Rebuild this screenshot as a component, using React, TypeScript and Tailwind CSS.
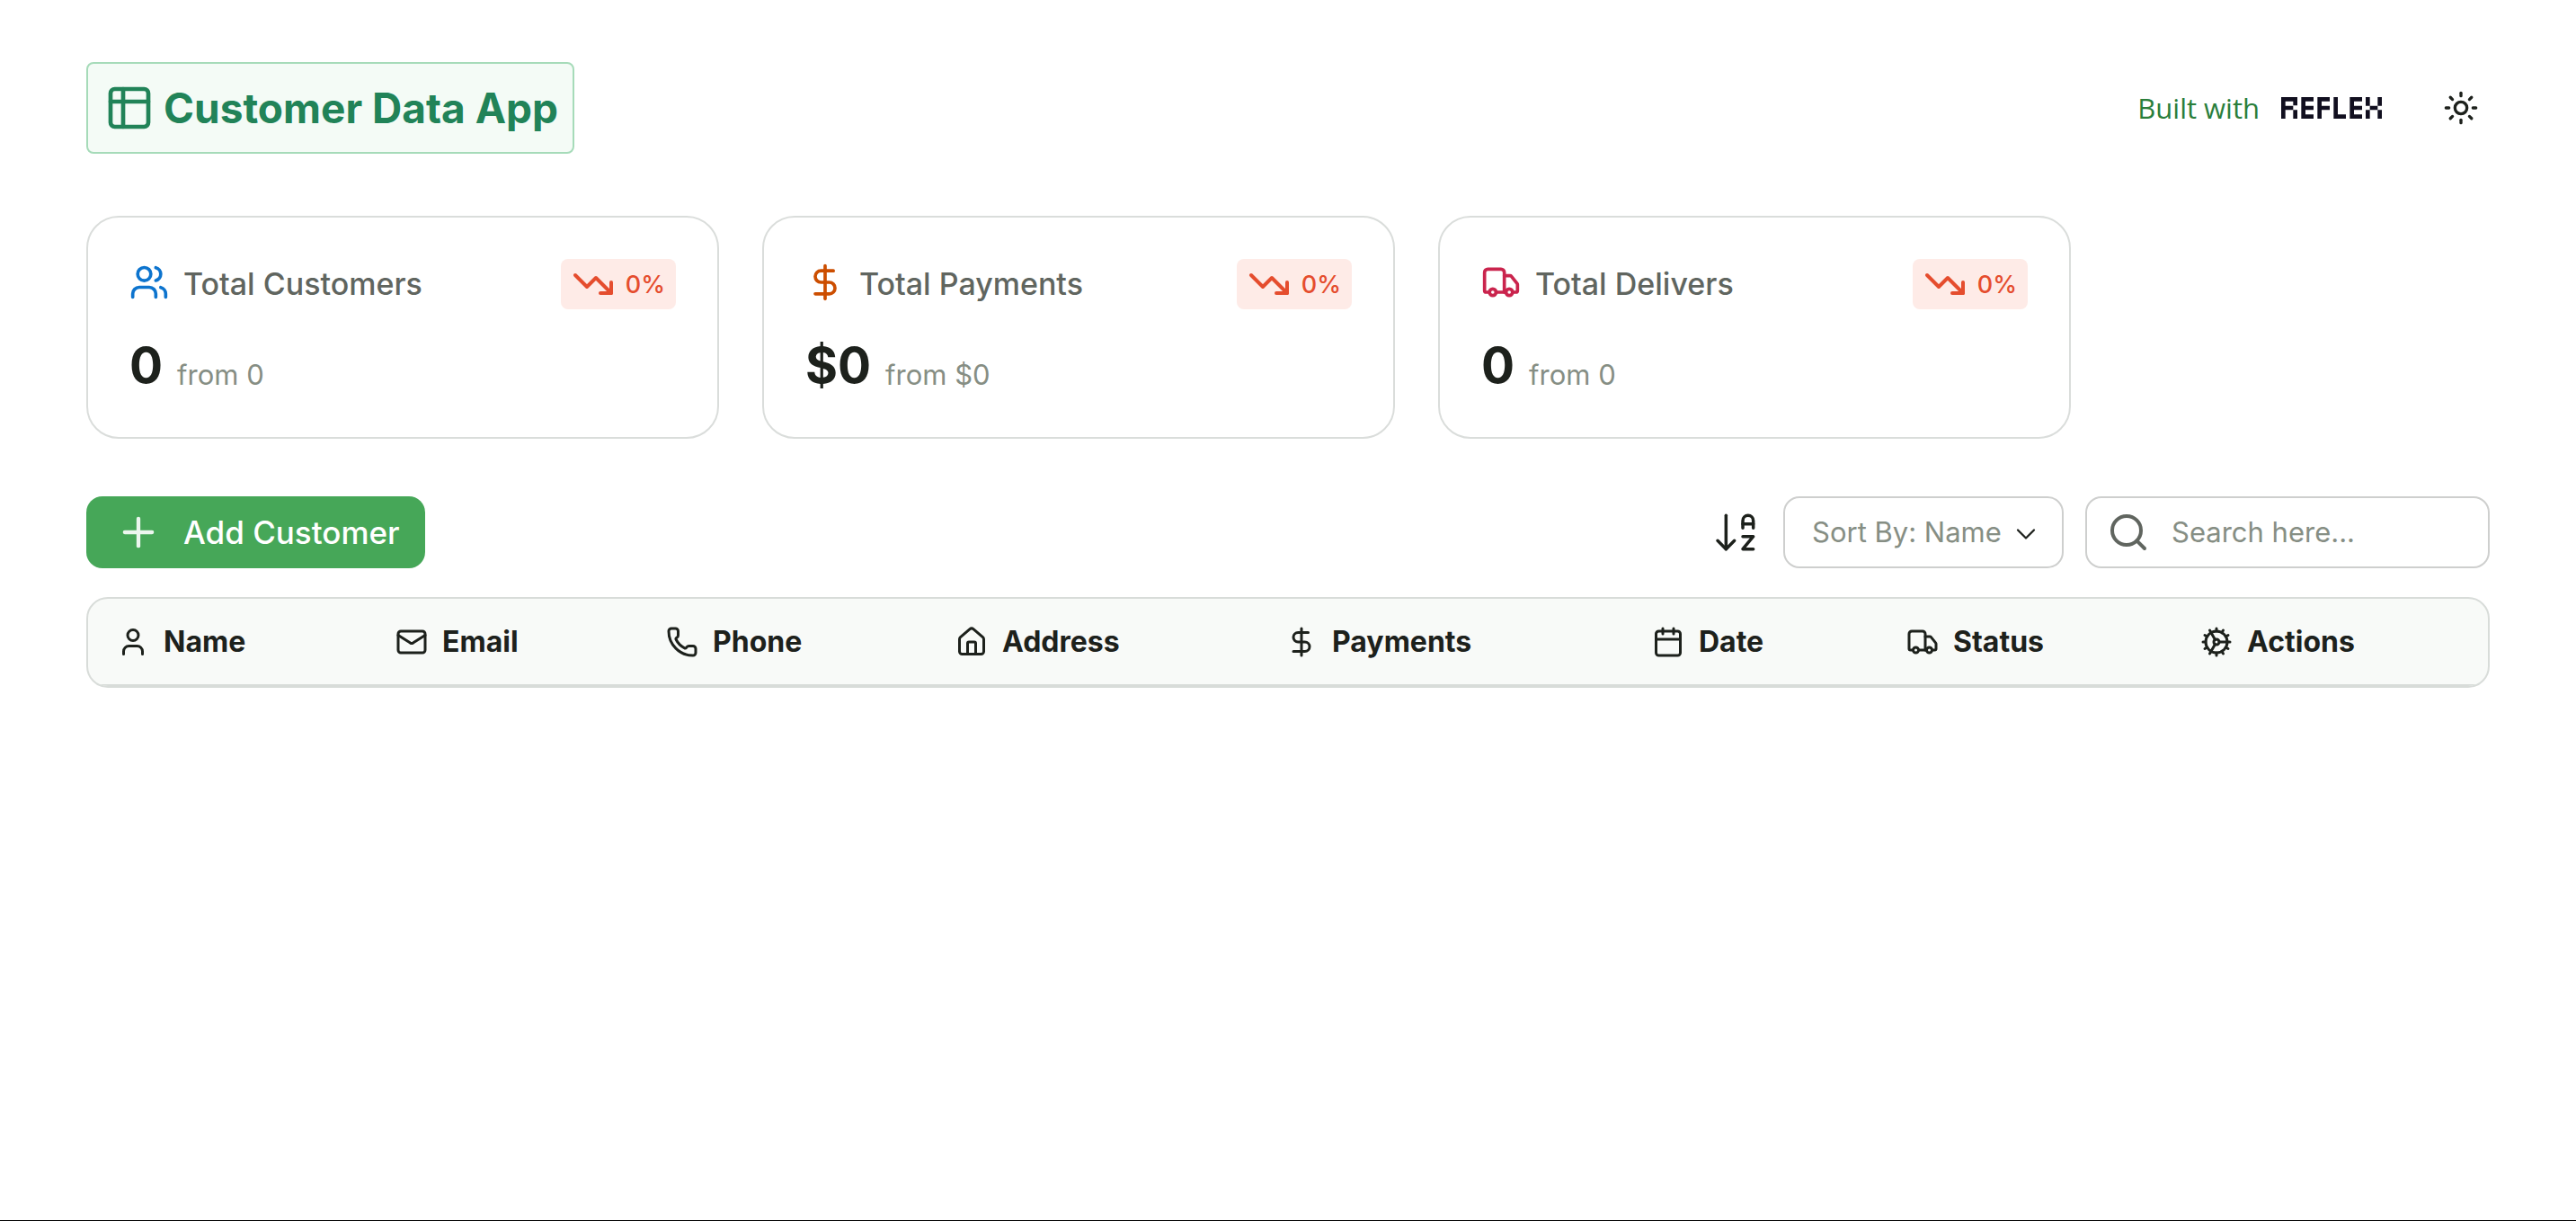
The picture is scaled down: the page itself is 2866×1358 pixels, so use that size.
import type { ReactNode } from "react";
import {
  ArrowDownAZ,
  Calendar,
  ChevronDown,
  Cog,
  DollarSign,
  House,
  Mail,
  Phone,
  Plus,
  Search,
  Sun,
  TrendingDown,
  Truck,
  User,
  Users,
  type LucideIcon,
} from "lucide-react";

function TableIcon() {
  return (
    <svg
      viewBox="0 0 24 24"
      className="size-14"
      fill="none"
      stroke="currentColor"
      strokeWidth="2"
      strokeLinecap="round"
      strokeLinejoin="round"
      aria-hidden="true"
    >
      <rect x="3" y="3" width="18" height="18" rx="2" />
      <path d="M3 9h18M9 3v18" />
    </svg>
  );
}

function ReflexLogo() {
  return (
    <svg viewBox="0 0 336 72" className="h-6 w-28" fill="#110f1f" role="img" aria-label="Reflex">
      <path d="M0 0h54v28H40V14H14v15h26v14H14v29H0zM40 43h14v29H40z" />
      <path d="M67 0h41v14H81v15h27v14H81v15h27v14H67z" />
      <path d="M121 0h41v14h-27v15h27v14h-27v29h-14z" />
      <path d="M175 0h14v58h27v14h-41z" />
      <path d="M229 0h41v14h-27v15h27v14h-27v15h27v14h-41z" />
      <path d="M282 0h14v29h-14zM322 0h14v29h-14zM296 29h26v14h-26zM282 43h14v29h-14zM322 43h14v29h-14z" />
    </svg>
  );
}

function StatCard({
  icon,
  label,
  value,
  previous,
}: {
  icon: ReactNode;
  label: string;
  value: string;
  previous: string;
}) {
  return (
    <article className="flex max-w-[704px] flex-1 flex-col gap-6 rounded-[36px] border-2 border-[#dadddb] px-[46px] pt-[46px] pb-[42px]">
      <div className="flex justify-between">
        <div className="flex gap-4 pt-1">
          {icon}
          <h2 className="text-[34px] leading-[48px] font-medium text-[#60655f]">{label}</h2>
        </div>
        <div className="flex h-14 items-center gap-3 rounded-lg bg-[#feebe7] px-3 text-[#e54d2e]">
          <TrendingDown className="size-12" />
          <span className="pt-0.5 text-[27px] leading-10 font-medium">0%</span>
        </div>
      </div>
      <div className="flex items-end gap-4">
        <span className="text-[55px] leading-[76px] font-bold text-[#1d211c]">{value}</span>
        <span className="text-[31px] leading-[54px] text-[#868e84]">from {previous}</span>
      </div>
    </article>
  );
}

const columns: { label: string; icon: LucideIcon; width: string }[] = [
  { label: "Name", icon: User, width: "w-[310px]" },
  { label: "Email", icon: Mail, width: "w-[301px]" },
  { label: "Phone", icon: Phone, width: "w-[322px]" },
  { label: "Address", icon: House, width: "w-[367px]" },
  { label: "Payments", icon: DollarSign, width: "w-[408px]" },
  { label: "Date", icon: Calendar, width: "w-[283px]" },
  { label: "Status", icon: Truck, width: "w-[327px]" },
  { label: "Actions", icon: Cog, width: "w-[352px]" },
];

export default function App() {
  return (
    <div className="flex min-h-screen flex-col border-b border-black bg-white px-24 pt-[69px] font-['Inter',sans-serif] text-[#1d211c]">
      <header className="flex items-center justify-between">
        <div className="flex items-center gap-2.5 rounded-lg border-2 border-[#a6dbb9] bg-[#f4fbf6] py-5 pr-4 pl-[18px] text-[#218358]">
          <TableIcon />
          <h1 className="text-[46px] leading-[58px] font-bold">Customer Data App</h1>
        </div>
        <div className="flex items-center">
          <a href="#reflex" className="flex items-center gap-6">
            <span className="font-['Open_Sans',sans-serif] text-[31px] text-[#2a7e3b]">Built with</span>
            <ReflexLogo />
          </a>
          <button type="button" aria-label="Toggle color mode" className="ml-14 grid size-16 place-items-center">
            <Sun className="size-10" />
          </button>
        </div>
      </header>

      <section className="mt-[69px] flex gap-12">
        <StatCard icon={<Users className="size-11 text-[#0d74ce]" />} label="Total Customers" value="0" previous="0" />
        <StatCard icon={<DollarSign className="size-11 text-[#cc4e00]" />} label="Total Payments" value="$0" previous="$0" />
        <StatCard icon={<Truck className="size-11 text-[#ca244d]" />} label="Total Delivers" value="0" previous="0" />
      </section>

      <section className="mt-16 flex items-center justify-between">
        <button type="button" className="flex h-20 items-center gap-6 rounded-[18px] bg-[#46a758] pr-7 pl-8 text-white">
          <Plus className="size-[52px] opacity-90" />
          <span className="text-[35px] font-medium">Add Customer</span>
        </button>
        <div className="flex items-center gap-6">
          <ArrowDownAZ strokeWidth={1.5} className="size-14" />
          <div className="relative w-[312px]">
            <select
              aria-label="Sort by"
              className="h-20 w-full appearance-none rounded-[18px] border-2 border-[#cecfce] bg-transparent pl-[30px] text-[31px] text-[#868e84]"
            >
              <option>Sort By: Name</option>
            </select>
            <ChevronDown strokeWidth={1.5} className="pointer-events-none absolute top-6 right-6 size-9" />
          </div>
          <label className="flex h-20 w-[450px] items-center gap-6 rounded-[18px] border-2 border-[#cecfce] px-[22px]">
            <Search className="size-12 shrink-0 text-[#60655f]" />
            <input
              type="text"
              aria-label="Search"
              placeholder="Search here..."
              className="w-full min-w-0 bg-transparent text-[31px] outline-none placeholder:text-[#868e84]"
            />
          </label>
        </div>
      </section>

      <div className="mt-8 overflow-hidden rounded-[24px] border-2 border-[#d8dcd9] bg-[#f8faf8]">
        <table className="w-full table-fixed border-collapse">
          <thead>
            <tr className="border-b-2 border-[#d8dcd9]">
              {columns.map(({ label, icon: Icon, width }) => (
                <th key={label} scope="col" className={`${width} h-24 pl-8 text-left`}>
                  <span className="flex items-center gap-4">
                    <Icon className="size-9 shrink-0" />
                    <span className="text-[32px] font-bold">{label}</span>
                  </span>
                </th>
              ))}
            </tr>
          </thead>
        </table>
      </div>
    </div>
  );
}
